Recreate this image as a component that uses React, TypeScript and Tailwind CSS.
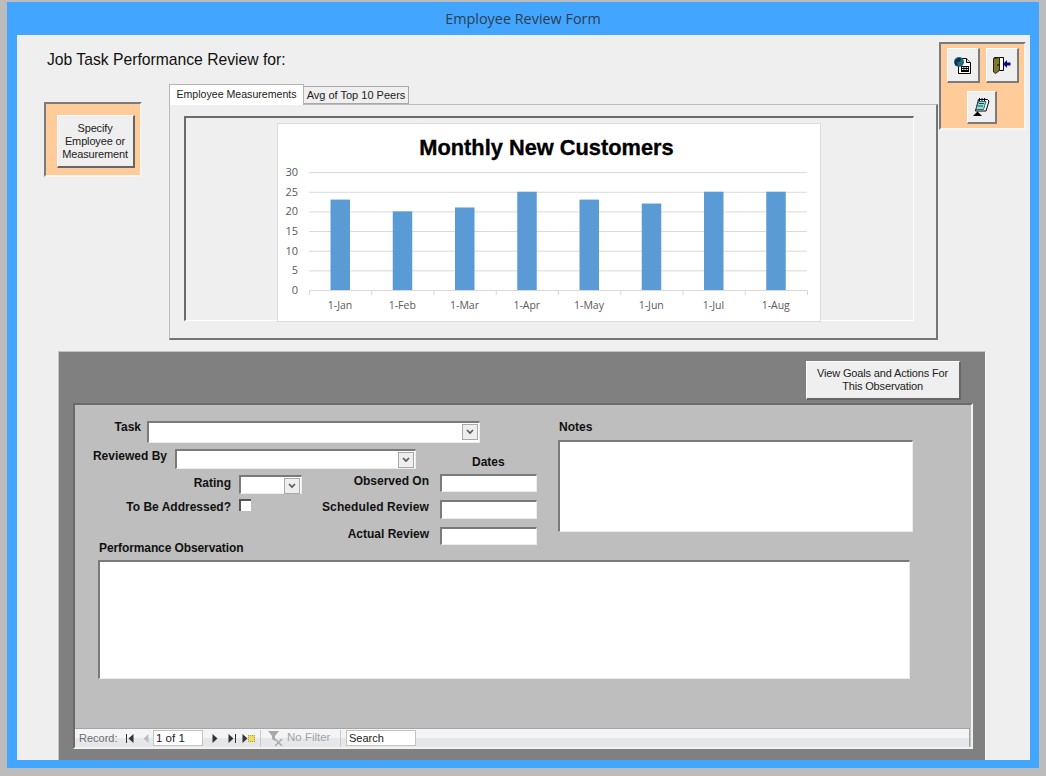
import React from "react";

const months = ["1-Jan", "1-Feb", "1-Mar", "1-Apr", "1-May", "1-Jun", "1-Jul", "1-Aug"];
const values = [23, 20, 21, 25, 23, 22, 25, 25];
const ticks = [0, 5, 10, 15, 20, 25, 30];

// svg origin sits at page x=278, y=124
const yFor = (v: number) => 166 - v * 3.93;

const Chart = () => (
  <svg width="542" height="197" className="block overflow-visible" style={{ fontFamily: '"Open Sans", sans-serif' }}>
    <text x="268.5" y="31" textAnchor="middle" fontSize="21.8" fontWeight="700" fill="#000" stroke="#000" strokeWidth="0.35" style={{ fontFamily: '"Liberation Sans", sans-serif' }}>
      Monthly New Customers
    </text>
    {ticks.map((t) => (
      <g key={t}>
        <line x1="31" x2="529" y1={yFor(t) + 0.5} y2={yFor(t) + 0.5} stroke="#d9d9d9" />
        <text x="20" y={yFor(t) + 4} textAnchor="end" fontSize="11" fill="#595959">
          {t}
        </text>
      </g>
    ))}
    {months.map((m, i) => {
      const cx = 31 + 62.25 * i + 31;
      return (
        <g key={m}>
          <rect x={cx - 9.5} y={yFor(values[i])} width="19.5" height={values[i] * 3.93} fill="#5b9bd5" />
          <line x1={31.5 + 62.25 * i} x2={31.5 + 62.25 * i} y1="166" y2="171" stroke="#d9d9d9" />
          <text x={cx} y="185" textAnchor="middle" fontSize="10.5" fill="#595959">
            {m}
          </text>
        </g>
      );
    })}
    <line x1="529.5" x2="529.5" y1="166" y2="171" stroke="#d9d9d9" />
  </svg>
);

const GlobeReportIcon = () => (
  <svg width="18" height="17" viewBox="0 0 18 17">
    <path d="M4.500 1.500h8l4 4v11h-12z" fill="#fff" stroke="#000" />
    <path d="M12.500 1.500v4h4" fill="#ddd" stroke="#000" />
    <circle cx="5" cy="5" r="5" fill="#1d6f72" />
    <path d="M1.500 2.500c2-1.500 4-2 5.500-1l-1 3-3 1 1 3-2 .5C.5 7 0 4.500 1.500 2.500z" fill="#12305a" />
    <rect x="7" y="9" width="8" height="6" fill="#000" />
    <path d="M8 10.500h1.500M10.300 10.500h1.500M12.600 10.500h1.500M8 12.500h1.500M10.300 12.500h1.500M12.600 12.500h1.500" stroke="#fff" />
  </svg>
);

const ExitDoorIcon = () => (
  <svg width="18" height="17" viewBox="0 0 18 17">
    <path d="M1.500 .5h9v13h-9z" fill="#fff" stroke="#000" />
    <path d="M.5 1.500l6-1v13l-4 3-2-1.500z" fill="#7d7a2e" stroke="#26260f" />
    <rect x="4.500" y="7" width="1" height="2" fill="#000" />
    <path d="M10 7l4-4v2.500h3.500v3H14v2.500z" fill="#0a0a8c" />
  </svg>
);

const NotepadIcon = () => (
  <svg width="17" height="18" viewBox="0 0 17 18">
    <path d="M5.500 1.500h9l1.500 1.500-3 10H2.500z" fill="#fff" stroke="#000" />
    <path d="M5.500 3.500h7.500l-2.500 8H3z" fill="#9adadd" stroke="#2a6a6a" />
    <path d="M6 5.500h5M5 8h5" stroke="#14505a" />
    <path d="M6.500 0v3M9 0v3M11.500 0v3" stroke="#000" />
    <path d="M0 18l4.500-4.500L9 18z" fill="#000" />
  </svg>
);

const IconButton = ({ className, children }: { className: string; children: React.ReactNode }) => (
  <button className={`flex items-center justify-center bg-[#efefef] border-t border-l border-t-white border-l-white border-r-2 border-b-2 border-r-[#7b7b7b] border-b-[#7b7b7b] ${className}`}>
    {children}
  </button>
);

const Label = ({ className, children }: { className: string; children: React.ReactNode }) => (
  <span className={`text-[12px] leading-[14px] font-bold text-[#111] whitespace-nowrap ${className}`}>{children}</span>
);

const Sunken = ({ className }: { className: string }) => (
  <div className={`bg-white border-t-2 border-l-2 border-t-[#7a7a7a] border-l-[#7a7a7a] border-r border-b border-r-[#ececec] border-b-[#ececec] ${className}`} />
);

const Combo = ({ className }: { className: string }) => (
  <div className={`flex justify-end bg-white border-t-2 border-l-2 border-t-[#7a7a7a] border-l-[#7a7a7a] border-r border-b border-r-[#ececec] border-b-[#ececec] p-px ${className}`}>
    <div className="w-[16px] h-[16px] flex items-center justify-center bg-[#eeeeee] border border-[#a9a9a9]">
      <svg width="8" height="6" viewBox="0 0 8 6">
        <path d="M1 1l3 3 3-3" fill="none" stroke="#555" strokeWidth="1.600" />
      </svg>
    </div>
  </div>
);

const Tri = ({ dir, color = "#333" }: { dir: "l" | "r"; color?: string }) => (
  <svg width="6" height="9" viewBox="0 0 6 9">
    <path d={dir === "l" ? "M5.500 0v9L.5 4.500z" : "M.5 0v9l5-4.500z"} fill={color} />
  </svg>
);

const NavBar = () => (
  <div className="h-[19px] w-[895px] flex items-center border-t border-r border-[#a6a6a6] bg-linear-to-b from-[#f3f4f6] from-50% to-[#e5e7ea] to-50% text-[11px] text-[#6e6e6e]">
    <span className="ml-[4px] w-[47px]">Record:</span>
    <span className="flex items-center gap-px">
      <span className="w-px h-[9px] bg-[#333]" />
      <Tri dir="l" />
    </span>
    <span className="ml-[9px]">
      <Tri dir="l" color="#bdbdbd" />
    </span>
    <div className="ml-[4px] w-[50px] h-[16px] bg-white border border-[#c4c4c4] text-[11.500px] leading-[14px] text-[#222] pl-[2px]">1 of 1</div>
    <span className="ml-[9px]">
      <Tri dir="r" />
    </span>
    <span className="ml-[10px] flex items-center gap-px">
      <Tri dir="r" />
      <span className="w-px h-[9px] bg-[#333]" />
    </span>
    <span className="ml-[6px] flex items-center">
      <Tri dir="r" />
      <span className="w-[7px] h-[7px] bg-[#eedc6a] border border-dotted border-[#b5a030]" />
    </span>
    <span className="ml-[5px] w-px h-[17px] bg-[#c9cbce]" />
    <svg className="ml-[7px]" width="17" height="17" viewBox="0 0 17 17">
      <path d="M0 1h11L7 6v5L4 9V6z" fill="#a9a9a9" />
      <path d="M7 9l7 7M14 9l-7 7" stroke="#a9a9a9" strokeWidth="1.500" />
    </svg>
    <span className="ml-[2px] w-[44px] text-[#a3a3a3] text-[11.500px] whitespace-nowrap">No Filter</span>
    <span className="ml-[9px] w-px h-[17px] bg-[#c9cbce]" />
    <div className="ml-[5px] w-[70px] h-[16px] bg-white border border-[#c4c4c4] text-[11px] leading-[14px] text-[#222] pl-[2px]">Search</div>
  </div>
);

const FormFields = () => (
  <div className="flex h-[155px]">
    <div className="w-[483px] flex flex-col">
      <div className="flex mt-[16px]">
        <Label className="w-[66px] text-right mt-[-1px]">Task</Label>
        <Combo className="ml-[6px] w-[333px] h-[22px]" />
      </div>
      <div className="flex mt-[6px] h-[25px]">
        <Label className="w-[92px] text-right">Reviewed By</Label>
        <Combo className="ml-[8px] w-[241px] h-[20px]" />
        <Label className="ml-[56px] mt-[6px]">Dates</Label>
      </div>
      <div className="flex">
        <div className="w-[227px] flex flex-col">
          <div className="flex mt-px">
            <Label className="w-[156px] text-right mt-[1px]">Rating</Label>
            <Combo className="ml-[8px] w-[63px] h-[19px]" />
          </div>
          <div className="flex mt-[5px]">
            <Label className="w-[156px] text-right mt-px">To Be Addressed?</Label>
            <div className="ml-[8px] w-[12px] h-[12px] bg-white border-t-2 border-l-2 border-t-[#555] border-l-[#555]" />
          </div>
          <Label className="ml-[24px] mt-[27px] tracking-[-0.1px]">Performance Observation</Label>
        </div>
        <div className="flex flex-col gap-[8px]">
          <div className="flex items-start">
            <Label className="w-[127px] text-right">Observed On</Label>
            <Sunken className="ml-[11px] w-[97px] h-[18px]" />
          </div>
          <div className="flex items-start">
            <Label className="w-[127px] text-right tracking-[0.1px]">Scheduled Review</Label>
            <Sunken className="ml-[11px] w-[97px] h-[19px]" />
          </div>
          <div className="flex items-start">
            <Label className="w-[127px] text-right">Actual Review</Label>
            <Sunken className="ml-[11px] w-[97px] h-[18px]" />
          </div>
        </div>
      </div>
    </div>
    <div className="flex flex-col">
      <Label className="ml-px mt-[15px] mb-[6px]">Notes</Label>
      <Sunken className="w-[355px] h-[92px]" />
    </div>
  </div>
);

export default function App() {
  return (
    <div className="w-[1046px] h-[776px] bg-[#bcbcbc] pt-[2px] pl-[7px] overflow-hidden" style={{ fontFamily: '"Liberation Sans", Arial, sans-serif' }}>
      <div className="w-[1032px] h-[766px] bg-[#42a5ff] px-[10px] pb-[8px] flex flex-col">
        <div className="h-[33px] flex items-center justify-center text-[14.400px] text-[#2c3e50]" style={{ fontFamily: '"Open Sans", sans-serif' }}>
          Employee Review Form
        </div>

        <div className="relative h-[725px] w-[1013px] bg-[#efefef] flex flex-col">
          {/* buttons panel hangs over the tab box */}
          <div className="absolute left-[922px] top-[7px] w-[87px] h-[88px] bg-[#ffcc99] border-t-2 border-l-2 border-t-[#7b7b7b] border-l-[#7b7b7b] border-r-2 border-b-2 border-r-[#f5f5f5] border-b-[#f5f5f5] pt-[4px] pl-[6px] z-10">
            <div className="flex gap-[6px]">
              <IconButton className="w-[33px] h-[35px]">
                <GlobeReportIcon />
              </IconButton>
              <IconButton className="w-[33px] h-[35px]">
                <ExitDoorIcon />
              </IconButton>
            </div>
            <IconButton className="ml-[20px] mt-[8px] w-[30px] h-[33px]">
              <NotepadIcon />
            </IconButton>
          </div>

          <div className="h-[49px] pl-[30px] pt-[15px] text-[15.700px] leading-[20px] text-[#111]">Job Task Performance Review for:</div>

          <div className="flex h-[267px]">
            <div className="ml-[27px] mt-[18px] w-[98px] h-[75px] bg-[#ffcc99] border-t-2 border-l-2 border-t-[#7b7b7b] border-l-[#7b7b7b] border-r-2 border-b-2 border-r-[#f5f5f5] border-b-[#f5f5f5] pt-[11px] pl-[11px]">
              <button className="w-[78px] h-[53px] pr-px bg-[#efefef] border-t border-l border-t-white border-l-white border-r-2 border-b-2 border-r-[#666] border-b-[#666] text-[11px] leading-[13px] tracking-[-0.15px] text-[#222]">
                Specify
                <br />
                Employee or
                <br />
                Measurement
              </button>
            </div>

            <div className="ml-[27px] w-[769px] flex flex-col">
              <div className="flex items-start h-[20px]">
                <div className="h-[21px] w-[135px] bg-white border-t border-l border-r border-[#b5b5b5] text-center text-[10.600px] leading-[19px] text-[#222] relative z-[1]">Employee Measurements</div>
                <div className="mt-[2px] h-[18px] w-[105px] bg-[#efefef] border-t border-r border-b border-[#a8a8a8] text-center text-[11px] leading-[17px] text-[#222]">Avg of Top 10 Peers</div>
              </div>
              <div className="h-[236px] border-t border-l border-[#bdbdbd] border-r-2 border-b-2 border-r-[#757575] border-b-[#757575] pt-[11px] pl-[14px]">
                <div className="w-[730px] h-[205px] border-t-2 border-l-2 border-t-[#6b6b6b] border-l-[#6b6b6b] border-r border-b border-r-white border-b-white pt-[5px] pl-[91px]">
                  <div className="w-[544px] h-[199px] bg-white border border-[#dcdcdc]">
                    <Chart />
                  </div>
                </div>
              </div>
            </div>
          </div>

          <div className="ml-[41px] w-[928px] h-[409px] bg-[#808080] border-t border-l border-[#c4c4c4] border-r border-r-[#f8f8f8] flex flex-col">
            <div className="h-[51px] flex justify-end items-start pt-[9px] pr-[24px]">
              <button className="w-[155px] h-[39px] pr-px bg-[#efefef] border-t border-l border-t-white border-l-white border-r-2 border-b-2 border-r-[#666] border-b-[#666] text-[11px] leading-[13px] tracking-[-0.15px] text-[#222]">
                View Goals and Actions For
                <br />
                This Observation
              </button>
            </div>
            <div className="ml-[14px] w-[900px] h-[346px] bg-[#bebebe] border-t-2 border-l-2 border-t-[#6b6b6b] border-l-[#6b6b6b] border-r-2 border-b-2 border-r-[#f2f2f2] border-b-[#f2f2f2] flex flex-col">
              <FormFields />
              <Sunken className="ml-[23px] w-[812px] h-[119px]" />
              <div className="flex-1" />
              <NavBar />
            </div>
          </div>
        </div>
      </div>
    </div>
  );
}
